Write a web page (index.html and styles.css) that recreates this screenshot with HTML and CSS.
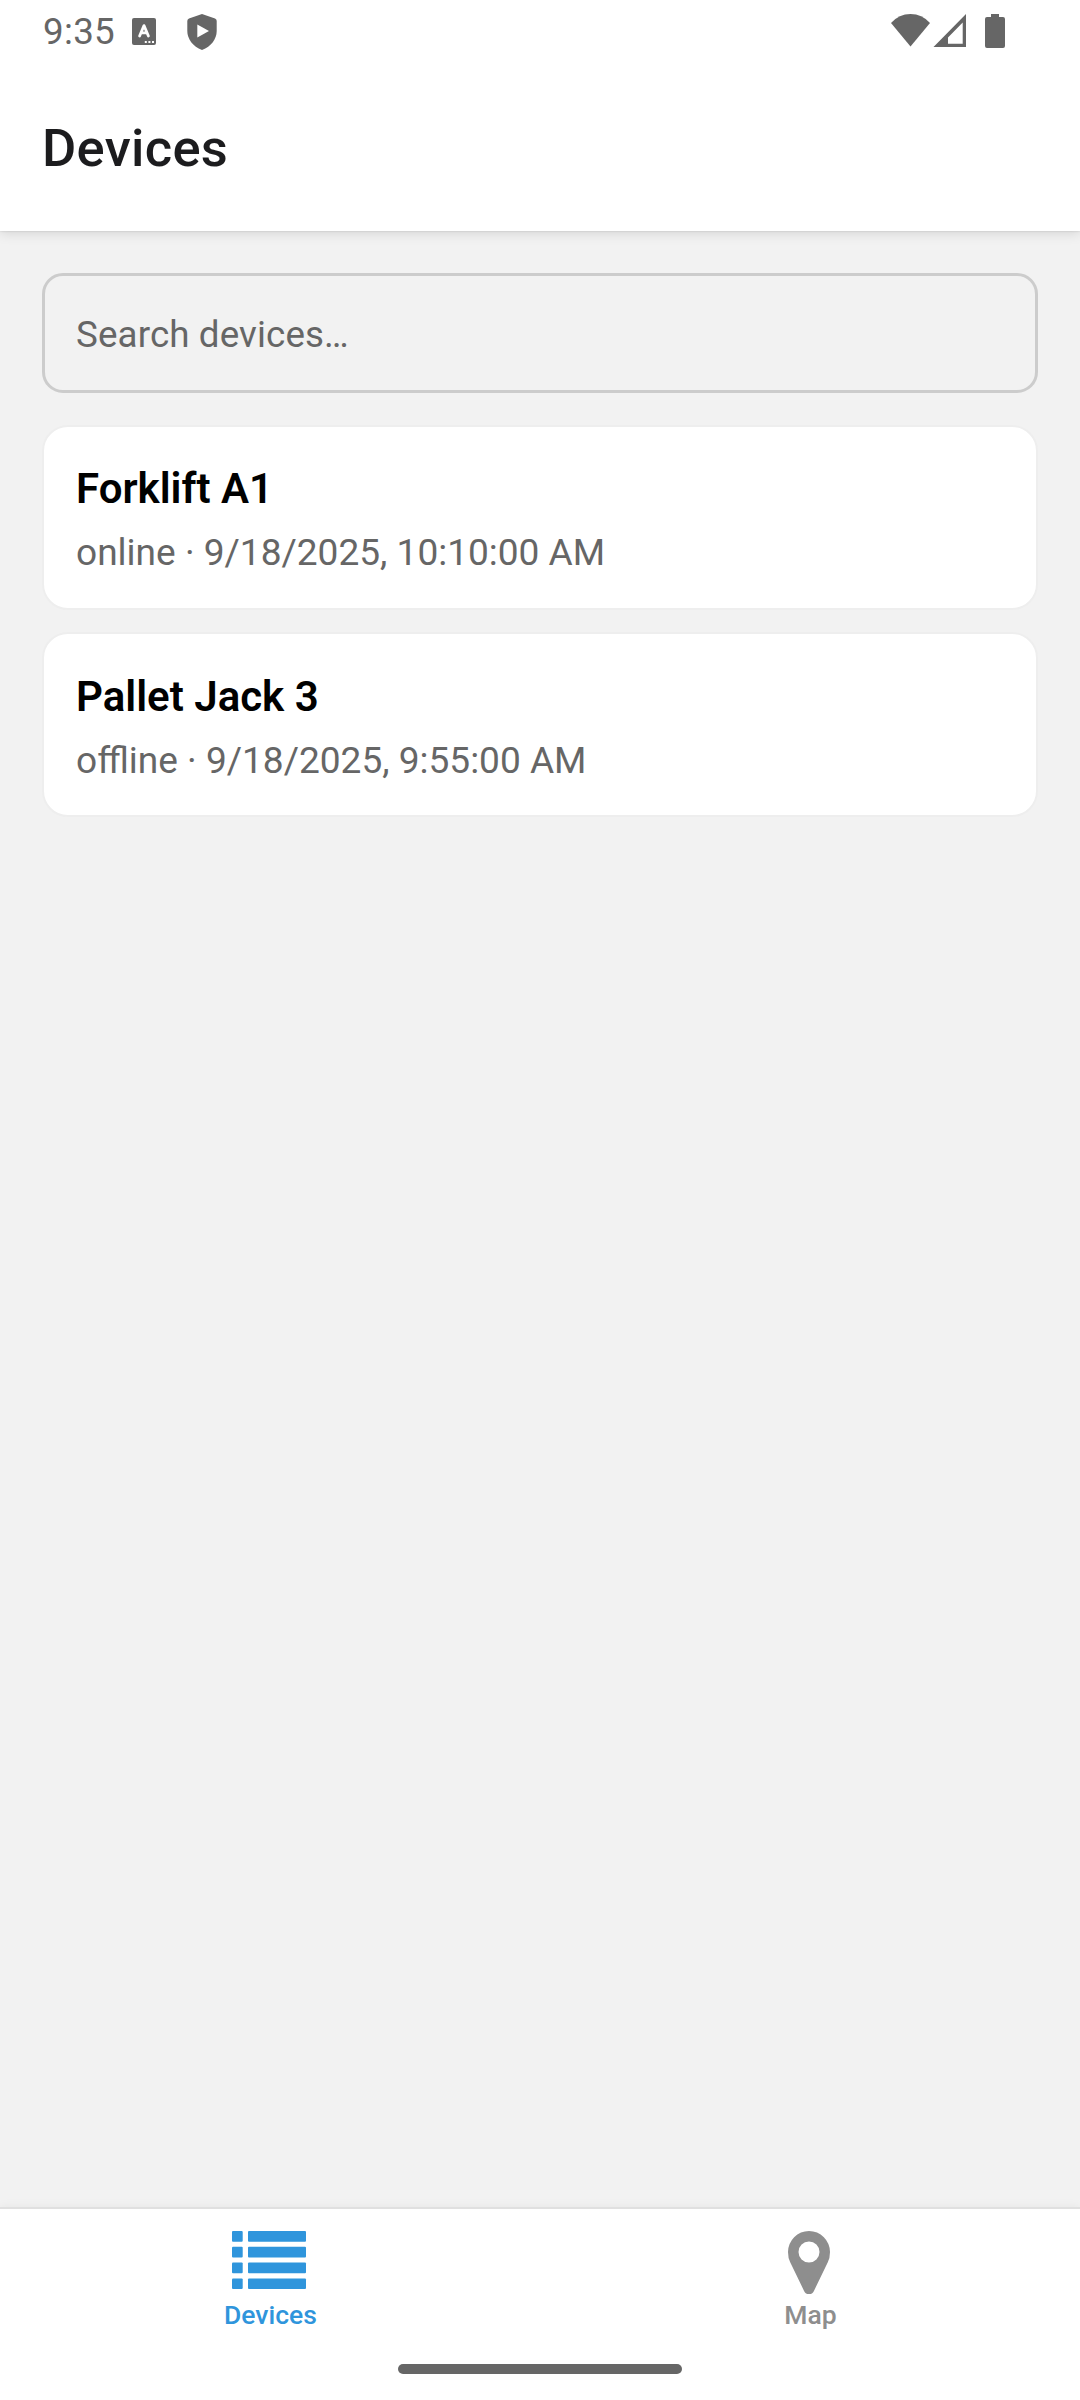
FILE: index.html
```html
<!DOCTYPE html>
<html lang="en">
<head>
<meta charset="utf-8">
<title>Devices</title>
<link rel="stylesheet" href="styles.css">
</head>
<body>
<div class="app">
  <header class="header">
    <div class="status">
      <span class="time">9:35</span>
      <svg class="keyboard" width="24" height="27" viewBox="0 0 24 27"><rect width="24" height="27" rx="2" fill="#666"/><path d="M7.6 18 12 7.6 16.4 18M9 14.8h6" fill="none" stroke="#fff" stroke-width="2.8" stroke-linecap="round" stroke-linejoin="round"/><path d="M12.8 23h2v2h-2zM16.4 23h2v2h-2zM20 23h2v2h-2z" fill="#fff"/></svg>
      <svg class="shield" width="30" height="36" viewBox="0 0 30 36"><path d="M15 0 28 4.6Q29.7 5.3 29.7 7v10c0 8-5.5 15.500-14.700 19C5.800 32.500.3 25 .3 17V7Q.3 5.300 2 4.600z" fill="#666"/><path d="M10.300 10.500v13L22 17z" fill="#fff"/></svg>
      <svg class="signals" width="116" height="36" viewBox="0 0 116 36"><path d="M0 9Q8 0 19.500 0T39 9L19.500 32.500z" fill="#666"/><path fill-rule="evenodd" d="M75 0v33H42.500zM71.700 8.500 57 23.500V29.700h14.700z" fill="#666"/><path d="M100 0h8v3h4q2 0 2 2v27q0 2-2 2H96q-2 0-2-2V5q0-2 2-2h4z" fill="#666"/></svg>
    </div>
    <h1 class="heading">Devices</h1>
  </header>
  <main class="content">
    <input class="search" type="text" placeholder="Search devices…">
    <section class="card">
      <h2 class="name">Forklift A1</h2>
      <p class="detail">online · 9/18/2025, 10:10:00 AM</p>
    </section>
    <section class="card">
      <h2 class="name">Pallet Jack 3</h2>
      <p class="detail">offline · 9/18/2025, 9:55:00 AM</p>
    </section>
  </main>
  <footer class="footer">
    <nav class="tabs">
      <a class="tab active">
        <svg width="76" height="64" viewBox="0 0 76 64" fill="currentColor"><rect y="0" width="10.700" height="10.700" rx="1"/><rect x="16" y="0" width="58" height="10.700" rx="1"/><rect y="15.800" width="10.700" height="10.700" rx="1"/><rect x="16" y="15.800" width="58" height="10.700" rx="1"/><rect y="31.600" width="10.700" height="10.700" rx="1"/><rect x="16" y="31.600" width="58" height="10.700" rx="1"/><rect y="47.400" width="10.700" height="10.700" rx="1"/><rect x="16" y="47.400" width="58" height="10.700" rx="1"/></svg>
        <span class="label">Devices</span>
      </a>
      <a class="tab">
        <svg width="44" height="64" viewBox="0 0 44 64"><path fill="currentColor" fill-rule="evenodd" d="M21 0A21 21 0 0 1 42 21Q42 27 39.800 31.200L25.800 60.200Q24.500 63.100 21 63.100T16.200 60.200L2.200 31.200Q0 27 0 21A21 21 0 0 1 21 0zM21 10.500a10.500 10.500 0 1 0 0 21a10.500 10.500 0 1 0 0-21z"/></svg>
        <span class="label">Map</span>
      </a>
    </nav>
    <div class="handle"></div>
  </footer>
</div>
</body>
</html>
```
FILE: styles.css
```css
* { box-sizing: border-box; }
body { margin: 0; font-family: Roboto, sans-serif; background: #f2f2f2; }
h1, h2, p { margin: 0; }
svg { display: block; }
.app { display: flex; flex-direction: column; height: 2400px; }
.header {
  height: 231px;
  background: #fff;
  box-shadow: 0 2px 12px rgba(0, 0, 0, .13), 0 0 2px rgba(0, 0, 0, .16);
  flex: none;
}
.status { display: flex; height: 62px; align-items: flex-start; padding: 0 73px 0 43px; }
.time { width: 89px; margin-top: 10px; font-size: 36.750px; line-height: 43px; letter-spacing: .3px; color: #666; }
.keyboard { margin-top: 18px; }
.shield { margin: 14px 0 0 31px; }
.signals { margin: 14px 0 0 auto; }
.heading { margin: 55px 0 0 42px; font-size: 52.500px; line-height: 62px; font-weight: 500; letter-spacing: .3px; color: #1c1c1e; }
.content { flex: 1; display: flex; flex-direction: column; padding: 42px; }
.search {
  height: 120px;
  margin-bottom: 31.500px;
  padding: 2px 31px 0;
  border: 3px solid #ccc;
  border-radius: 21px;
  background: transparent;
  font: 36.750px/44px Roboto, sans-serif;
  letter-spacing: .12px;
  outline: none;
}
.search::placeholder { color: #666; opacity: 1; }
.card {
  height: 185px;
  margin-bottom: 22.500px;
  padding: 37.500px 32px 0;
  border: 2px solid #eee;
  border-radius: 26px;
  background: #fff;
}
.name { font-size: 42px; line-height: 50px; font-weight: 600; color: #000; }
.detail { margin-top: 17px; font-size: 37.050px; line-height: 43px; color: #666; }
.footer {
  height: 193px;
  border-top: 2px solid #e0e0e0;
  background: #fff;
  box-shadow: 0 0 10px rgba(0, 0, 0, .06);
}
.tabs { display: flex; height: 155px; }
.tab { flex: 1; display: flex; flex-direction: column; align-items: center; padding-top: 22px; color: #8e8e8e; }
.tab.active { color: #2f95dc; }
.label { margin: 4px 0 0 1px; font-size: 26.500px; line-height: 31px; font-weight: 500; }
.handle { width: 284px; height: 10px; margin: 0 auto; border-radius: 5px; background: #666; }
```
